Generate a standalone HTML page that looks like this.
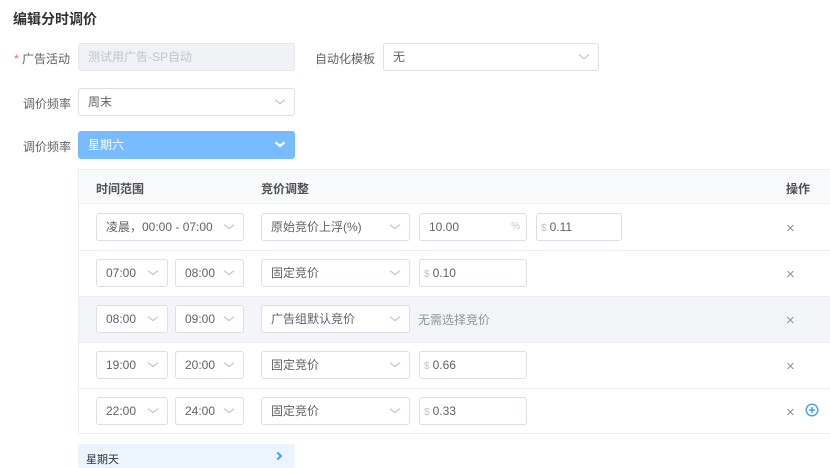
<!DOCTYPE html>
<html><head><meta charset="utf-8"><style>
*{box-sizing:border-box;margin:0;padding:0}
body{width:830px;height:468px;background:#fff;font-family:"Liberation Sans","Noto Sans CJK SC",sans-serif;font-size:12px;color:#606266;position:relative;overflow:hidden}
.a{position:absolute}
.box{position:absolute;border:1px solid #dcdfe6;border-radius:3px;background:#fff;height:28px;line-height:26px;padding-left:9px;color:#606266;font-size:12px}
.arr{position:absolute;right:11px;top:8px;width:6px;height:6px;border-right:1px solid #c0c4cc;border-bottom:1px solid #c0c4cc;transform:scaleX(1.3) rotate(45deg)}
.lbl{position:absolute;font-size:12px;color:#606266}
.x{position:absolute;font-size:15px;color:#909399;left:786px}
.d{color:#c0c4cc;font-size:10px;margin-right:3px}
</style></head><body>
<div class="a" style="left:13px;top:9px;font-size:14px;font-weight:bold;color:#303133">编辑分时调价</div>

<div class="lbl" style="left:14px;top:50px"><span style="color:#f56c6c">*</span> 广告活动</div>
<div class="box" style="left:78px;top:43px;width:217px;background:#f0f2f6;border-color:#e4e7ed;color:#c0c4cc">测试用广告-SP自动</div>
<div class="lbl" style="left:315px;top:50px">自动化模板</div>
<div class="box" style="left:383px;top:43px;width:216px">无<span class="arr"></span></div>

<div class="lbl" style="left:23px;top:95px">调价频率</div>
<div class="box" style="left:78px;top:88px;width:217px">周末<span class="arr"></span></div>

<div class="lbl" style="left:23px;top:138px">调价频率</div>
<div class="box" style="left:78px;top:131px;width:217px;background:#79bbff;border-color:#79bbff;color:#fff">星期六<span class="arr" style="border-color:#fff;border-width:2px;top:8px"></span></div>

<div class="a" style="left:78px;top:169px;width:752px;height:265px;border:1px solid #ebeef5;border-right:none"></div>
<div class="a" style="left:79px;top:170px;width:751px;height:34px;background:#f8f9fb;border-bottom:1px solid #ebeef5"></div>
<div class="a" style="left:96px;top:180px;font-weight:bold;color:#505050">时间范围</div>
<div class="a" style="left:261px;top:180px;font-weight:bold;color:#505050">竞价调整</div>
<div class="a" style="left:786px;top:180px;font-weight:bold;color:#505050">操作</div>

<div class="a" style="left:79px;top:250px;width:751px;border-top:1px solid #ebeef5"></div>
<div class="a" style="left:79px;top:296px;width:751px;height:46px;background:#f3f5f9;border-top:1px solid #ebeef5"></div>
<div class="a" style="left:79px;top:342px;width:751px;border-top:1px solid #ebeef5"></div>
<div class="a" style="left:79px;top:388px;width:751px;border-top:1px solid #ebeef5"></div>

<div class="box" style="left:96px;top:213px;width:148px">凌晨，00:00 - 07:00<span class="arr"></span></div>
<div class="box" style="left:261px;top:213px;width:149px">原始竞价上浮(%)<span class="arr"></span></div>
<div class="box" style="left:419px;top:213px;width:108px">10.00<span style="position:absolute;right:6px;color:#c0c4cc;font-size:10px">%</span></div>
<div class="box" style="left:536px;top:213px;width:86px;padding-left:4px"><span class="d">$</span>0.11</div>
<div class="x" style="top:220px">×</div>

<div class="box" style="left:96px;top:259px;width:72px">07:00<span class="arr"></span></div>
<div class="box" style="left:175px;top:259px;width:69px">08:00<span class="arr"></span></div>
<div class="box" style="left:261px;top:259px;width:149px">固定竞价<span class="arr"></span></div>
<div class="box" style="left:419px;top:259px;width:108px;padding-left:4px"><span class="d">$</span>0.10</div>
<div class="x" style="top:266px">×</div>

<div class="box" style="left:96px;top:305px;width:72px">08:00<span class="arr"></span></div>
<div class="box" style="left:175px;top:305px;width:69px">09:00<span class="arr"></span></div>
<div class="box" style="left:261px;top:305px;width:149px">广告组默认竞价<span class="arr"></span></div>
<div class="a" style="left:418px;top:311px;color:#909399">无需选择竞价</div>
<div class="x" style="top:312px">×</div>

<div class="box" style="left:96px;top:351px;width:72px">19:00<span class="arr"></span></div>
<div class="box" style="left:175px;top:351px;width:69px">20:00<span class="arr"></span></div>
<div class="box" style="left:261px;top:351px;width:149px">固定竞价<span class="arr"></span></div>
<div class="box" style="left:419px;top:351px;width:108px;padding-left:4px"><span class="d">$</span>0.66</div>
<div class="x" style="top:358px">×</div>

<div class="box" style="left:96px;top:397px;width:72px">22:00<span class="arr"></span></div>
<div class="box" style="left:175px;top:397px;width:69px">24:00<span class="arr"></span></div>
<div class="box" style="left:261px;top:397px;width:149px">固定竞价<span class="arr"></span></div>
<div class="box" style="left:419px;top:397px;width:108px;padding-left:4px"><span class="d">$</span>0.33</div>
<div class="x" style="top:404px">×</div>
<svg class="a" style="left:805px;top:403px" width="14" height="14" viewBox="0 0 14 14"><circle cx="7" cy="7" r="5.8" fill="none" stroke="#409eff" stroke-width="1.4"/><path d="M4 7h6M7 4v6" stroke="#409eff" stroke-width="1.5"/></svg>

<div class="a" style="left:78px;top:444px;width:217px;height:24px;background:#ecf5ff;border-radius:2px"></div>
<div class="a" style="left:86px;top:451px;color:#303133;font-size:11px">星期天</div>
<div class="a" style="left:275px;top:453px;width:6px;height:6px;border-right:2px solid #409eff;border-top:2px solid #409eff;transform:rotate(45deg)"></div>
</body></html>
